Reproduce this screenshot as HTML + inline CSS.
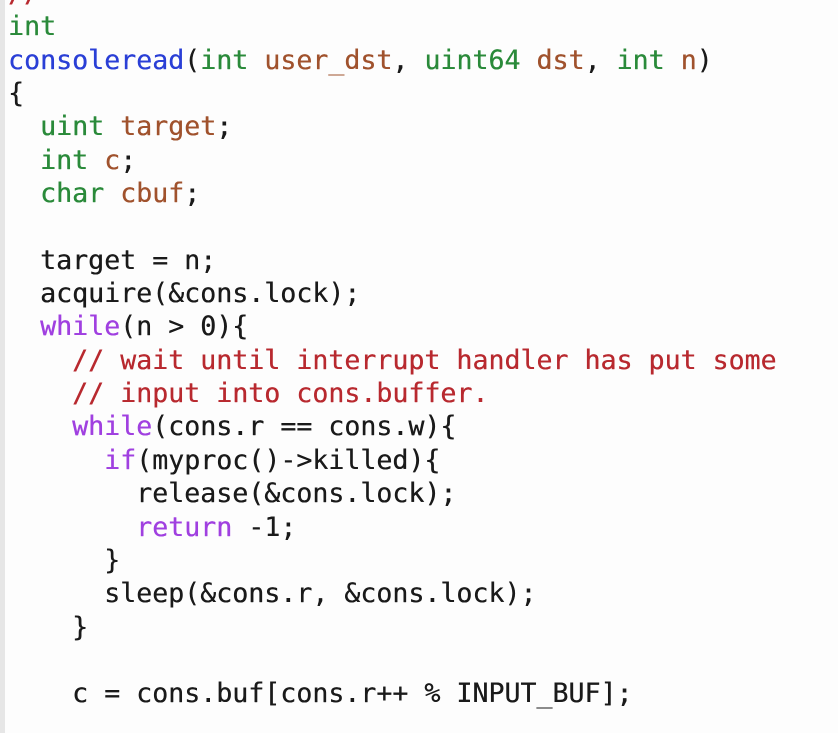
<!DOCTYPE html>
<html><head><meta charset="utf-8"><style>
html,body{margin:0;padding:0;width:838px;height:733px;overflow:hidden;background:#fdfdfd;}
.strip{position:absolute;left:0;top:0;width:5px;height:733px;background:#e6e6e6;}
pre{position:absolute;left:8px;top:-23px;margin:0;font-family:"DejaVu Sans Mono","Liberation Mono",monospace;font-size:26.6px;line-height:33.35px;color:#1a1a1a;text-shadow:0.3px 0 0 currentColor;}
.t{color:#2a8a3a}.f{color:#2a3fd6}.v{color:#a0522d}.c{color:#b8292f}.k{color:#a040e0}
</style></head><body><div class="strip"></div>
<pre><span class="c">//</span>
<span class="t">int</span>
<span class="f">consoleread</span>(<span class="t">int</span> <span class="v">user_dst</span>, <span class="t">uint64</span> <span class="v">dst</span>, <span class="t">int</span> <span class="v">n</span>)
{
  <span class="t">uint</span> <span class="v">target</span>;
  <span class="t">int</span> <span class="v">c</span>;
  <span class="t">char</span> <span class="v">cbuf</span>;

  target = n;
  acquire(&amp;cons.lock);
  <span class="k">while</span>(n &gt; 0){
    <span class="c">// wait until interrupt handler has put some</span>
    <span class="c">// input into cons.buffer.</span>
    <span class="k">while</span>(cons.r == cons.w){
      <span class="k">if</span>(myproc()-&gt;killed){
        release(&amp;cons.lock);
        <span class="k">return</span> -1;
      }
      sleep(&amp;cons.r, &amp;cons.lock);
    }

    c = cons.buf[cons.r++ % INPUT_BUF];
</pre></body></html>
